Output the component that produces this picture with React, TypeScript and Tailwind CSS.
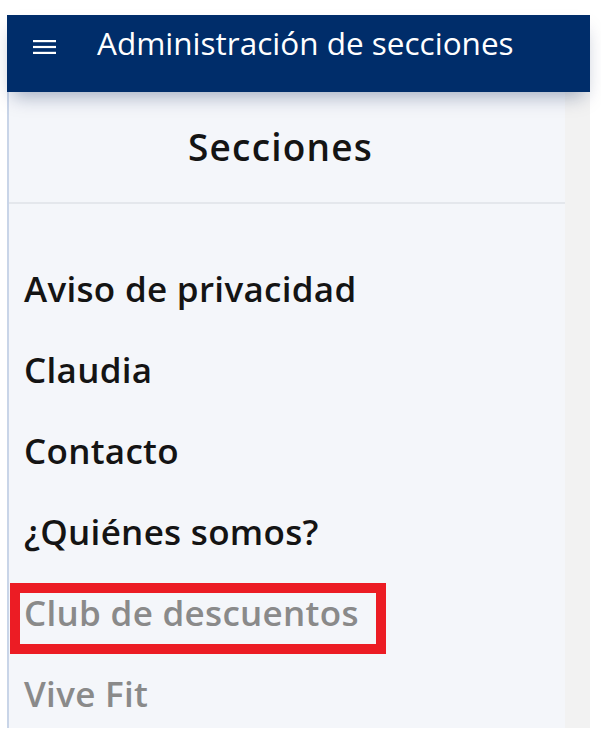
const SECTIONS = [
  { label: 'Aviso de privacidad', active: true },
  { label: 'Claudia', active: true },
  { label: 'Contacto', active: true },
  { label: '¿Quiénes somos?', active: true },
  { label: 'Club de descuentos', active: false, marked: true },
  { label: 'Vive Fit', active: false },
]

function MenuIcon() {
  return (
    <svg width="23" height="14" viewBox="0 0 23 14" className="-mt-[13px] shrink-0">
      <rect x="0" y="0" width="23" height="2.2" fill="#ffffff" />
      <rect x="0" y="5.9" width="23" height="2.2" fill="#ffffff" />
      <rect x="0" y="11.8" width="23" height="2.2" fill="#ffffff" />
    </svg>
  )
}

export default function App() {
  return (
    <div className="h-[744px] overflow-hidden bg-white pl-[7px] pr-[11px] pt-[15px]">
      <header className="relative z-10 flex h-[77px] items-center bg-[#002d6a] pl-[26px] shadow-[0_10px_18px_-6px_rgba(0,30,80,0.35)]">
        <MenuIcon />
        <span className="-mt-[22px] ml-[41px] font-['Open_Sans',sans-serif] text-[31.5px] leading-none text-white">
          Administración de secciones
        </span>
      </header>

      <div className="flex h-[636px]">
        <aside className="w-[558px] overflow-hidden border-l-2 border-[#c9d5e8] bg-[#f4f6fa] font-['Open_Sans',sans-serif]">
          <div className="flex h-[112px] items-center justify-center border-b-2 border-[#e4e7ec] pr-[13px]">
            <h2 className="text-[37px] font-semibold tracking-[1.2px] text-[#141414]">Secciones</h2>
          </div>
          <ul className="pt-[45px]">
            {SECTIONS.map((s) => (
              <li key={s.label} className="relative flex h-[81px] items-center pl-[15px]">
                <span
                  className={`text-[35px] font-semibold tracking-[0.3px] ${s.active ? 'text-[#141414]' : 'text-[#8a8a8a]'}`}
                >
                  {s.label}
                </span>
                {s.marked && (
                  <span className="absolute left-[1px] top-[10px] h-[71px] w-[376px] border-[10px] border-[#ec1c24]" />
                )}
              </li>
            ))}
          </ul>
        </aside>
        <div className="flex-1 bg-[#f2f2f2]" />
      </div>
    </div>
  )
}
